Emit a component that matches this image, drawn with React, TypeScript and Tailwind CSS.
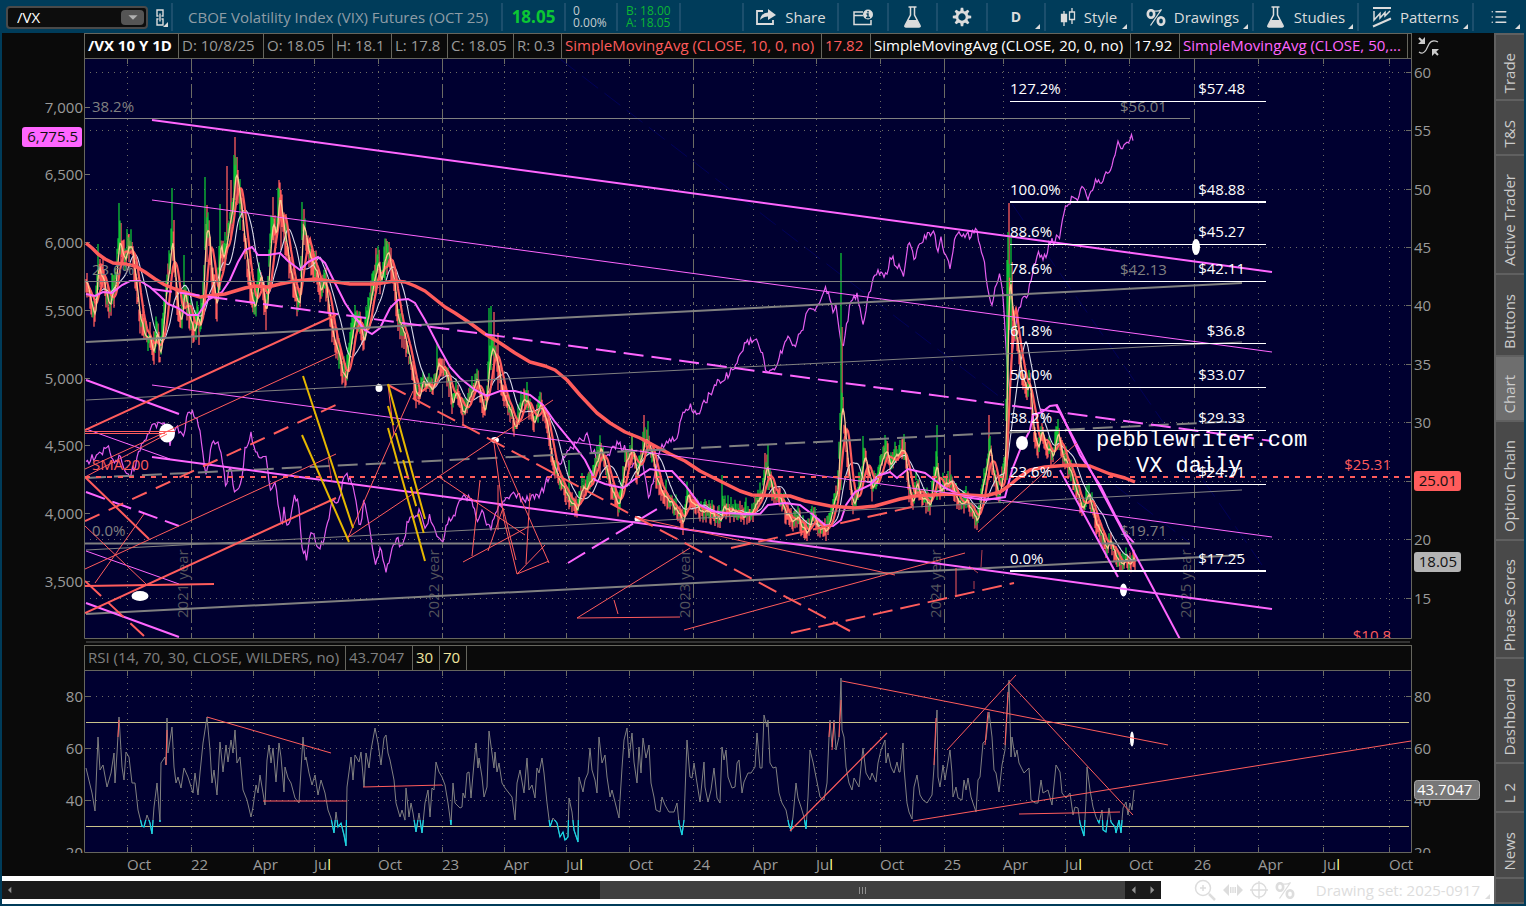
import type { ReactNode } from 'react'
import { List } from 'lucide-react'
import { MdArrowLeft, MdArrowRight, MdArrowDropDown } from 'react-icons/md'

type Line = {
  p: [number, number, number, number]
  c: string
  w?: number
  dash?: string
  o?: number
}

const RED = '#ff5c5c'
const MAGENTA = '#ff66ff'
const GRAY = '#808080'
const YELLOW = '#e6b800'
const WHITE = '#ffffff'
const NAVY = '#000058'

/* ---------- series, x and y in chart units ---------- */

const PRICE = `86,278 91,300 95,320 98,262 104,285 109,305 115,285 119,240 121,250 124,262 129,245 132,250 135,280
140,320 145,336 150,338 153,354 157,330 160,361 163,322 166,290 169,270 172,235 174,265 178,310 181,325 184,290 188,310
194,335 198,305 199,337 203,300 205,235 208,225 212,280 217,308 220,240 223,262 228,230 232,210 235,172 239,190 245,245
249,280 252,300 255,310 258,285 261,275 266,318 270,250 273,220 276,235 279,195 283,225 288,255 294,292 300,308 302,225
305,228 308,250 313,265 317,272 320,292 325,278 332,335 338,355 346,382 350,345 355,320 359,318 364,342 370,300 375,275
378,260 381,285 385,255 388,250 393,275 398,320 404,335 410,360 416,394 420,397 423,380 432,392 437,365 443,368 450,385
452,407 455,390 463,414 470,396 477,378 485,414 489,360 492,348 496,355 500,382 505,396 516,430 521,402 527,400 534,426
541,402 546,418 551,455 558,480 568,496 577,508 582,490 590,485 600,448 605,462 612,492 619,506 625,462 632,448 637,475
645,438 650,445 655,475 662,492 672,505 683,522 687,495 697,508 703,514 708,510 721,522 723,505 730,512 740,514 752,511
762,494 766,465 772,490 780,500 790,522 796,515 806,536 812,517 820,528 826,532 833,505 838,485 840,420 842,400 846,445
850,488 853,504 860,485 864,455 868,470 872,488 877,478 882,460 886,448 890,462 898,455 904,448 908,485 913,504 916,482
922,498 930,505 936,460 940,488 950,480 953,488 958,504 966,500 977,520 982,490 986,465 990,450 993,470 999,496 1005,460
1007,360 1009,270 1012,310 1017,345 1021,370 1026,388 1030,385 1034,440 1038,446 1042,430 1046,445 1053,456 1058,432
1062,455 1070,470 1076,490 1082,508 1088,495 1095,520 1102,535 1107,548 1110,538 1116,560 1122,564 1126,560 1132,563 1135,562`

/* x, top, bottom, up */
const WICKS: [number, number, number, 0 | 1][] = [
  [98, 244, 290, 1], [119, 203, 250, 1], [121, 223, 255, 0], [129, 234, 262, 0], [172, 188, 245, 1],
  [174, 220, 270, 0], [184, 255, 300, 1], [205, 177, 250, 1], [207, 205, 262, 0], [220, 204, 290, 1],
  [227, 166, 240, 0], [231, 180, 240, 0], [234, 155, 215, 1], [235, 137, 200, 0], [237, 157, 205, 0],
  [240, 179, 230, 1], [273, 197, 240, 0], [279, 180, 220, 0], [281, 190, 250, 0], [286, 214, 260, 0],
  [302, 202, 240, 1], [304, 210, 245, 0], [376, 248, 290, 0], [385, 242, 280, 1], [387, 241, 275, 0],
  [437, 343, 380, 1], [489, 308, 380, 1], [491, 306, 370, 1], [494, 312, 380, 0], [498, 333, 390, 0],
  [527, 382, 410, 1], [569, 460, 500, 1], [600, 442, 480, 0], [632, 435, 465, 0], [644, 415, 450, 0],
  [648, 421, 455, 1], [722, 475, 515, 1], [765, 453, 480, 0], [768, 444, 490, 1], [841, 253, 490, 1],
  [842, 327, 400, 0], [863, 436, 480, 1], [885, 435, 465, 1], [904, 434, 460, 1], [937, 425, 500, 1],
  [950, 455, 490, 0], [989, 415, 480, 0], [1007, 260, 480, 1], [1008, 232, 400, 1], [1009, 203, 330, 0],
  [1011, 235, 330, 1], [1012, 262, 350, 0], [1058, 420, 450, 1],
]

const SPX = `86,463 92,458 100,455 108,447 114,460 120,458 125,468 130,475 135,465 140,450 147,438 152,425 158,425 165,423
170,446 176,424 183,438 188,412 194,413 200,430 206,475 212,445 217,440 222,460 226,487 230,465 235,495 240,490 245,450
251,435 256,450 260,460 266,455 270,495 275,480 282,530 284,508 288,530 294,495 298,500 302,545 307,560 311,530 318,545
322,545 328,520 333,500 339,499 345,475 350,480 354,490 360,530 364,500 370,530 376,565 380,545 386,571 392,550 397,538
402,550 408,520 415,515 420,512 425,530 430,515 434,530 440,537 443,538 448,520 455,515 461,498 470,497 477,520 481,510
485,518 490,530 496,515 503,500 510,497 518,495 522,500 530,499 536,498 543,490 548,478 554,475 560,463 565,455 573,447
580,440 587,436 592,450 600,460 608,455 614,445 620,445 626,450 630,470 636,465 642,462 648,497 655,475 660,450 667,443
676,440 682,415 690,405 697,415 705,402 712,390 720,380 728,375 735,365 742,348 750,341 757,342 762,355 768,375 775,370
780,355 787,338 795,345 802,330 809,308 817,308 825,288 829,295 833,315 836,308 843,350 850,305 857,295 863,325 868,300
873,275 880,272 885,278 891,258 898,265 903,278 908,243 914,258 920,243 928,235 934,230 937,255 941,235 945,255 950,265
957,230 963,235 970,235 976,226 979,245 984,260 991,308 996,285 1000,270 1003,298 1007,365 1010,390 1012,350 1018,310
1022,300 1028,292 1033,270 1038,250 1043,262 1050,243 1055,240 1060,235 1065,210 1070,200 1078,197 1084,183 1088,202
1095,182 1102,180 1110,170 1115,158 1118,142 1122,150 1126,145 1131,137 1134,138`

const SMA200 = `86,243 92,248 98,254 105,259 113,263 125,264 135,266 145,272 155,279 165,285 175,289 190,294 200,297 208,296
225,294 235,291 245,288 255,286 268,287 280,284 295,281 315,279 330,281 350,284 375,284 395,281 405,282 415,286 425,291
435,299 445,307 455,313 470,323 485,334 500,343 515,353 530,362 545,366 555,370 567,380 580,395 597,413 610,423 625,432
640,438 655,446 670,454 685,461 700,471 720,481 740,491 752,495 790,496 805,501 830,506 855,508 875,506 900,499 915,496
950,494 985,496 1000,492 1010,485 1018,478 1030,470 1045,467 1070,465 1090,466 1110,474 1125,478 1135,482`

const SMA50 = `86,294 95,296 103,292 112,293 122,285 130,281 140,281 150,287 160,296 168,304 178,308 188,315 198,315 208,300
222,292 230,280 238,262 245,250 252,247 258,255 268,255 280,253 288,261 300,270 308,262 318,257 325,263 335,283 345,303
355,318 365,330 372,334 380,328 390,308 398,300 408,299 415,303 425,320 440,349 450,367 460,378 475,390 487,396 500,391
515,391 530,395 543,405 555,422 570,440 585,460 595,480 605,484 623,488 635,479 650,469 662,471 672,471 685,485 700,505
712,511 725,513 745,514 760,514 768,505 785,503 800,505 812,514 825,525 833,526 841,520 846,505 855,492 870,485 880,475
890,472 897,478 908,469 925,473 945,488 965,497 985,500 1005,497 1012,470 1020,450 1030,430 1033,415 1042,412 1050,406
1057,405 1062,415 1080,455 1100,485 1115,515 1125,533 1134,543`

const RSI = `86,768 92,793 95,811 98,737 100,770 103,765 107,787 111,773 114,753 115,783 117,753 119,717 122,767 124,780
126,752 129,757 132,783 135,783 138,810 142,826 144,827 147,815 150,823 152,834 154,807 157,783 160,822 161,763 165,757
166,765 167,718 168,753 172,727 174,767 176,783 178,777 181,788 184,768 188,777 193,793 195,773 198,795 200,773 203,743
207,717 210,750 212,783 214,770 217,795 220,742 223,772 226,745 228,762 231,740 233,753 235,730 237,763 240,757 243,790
247,800 251,817 253,807 256,785 258,793 260,775 265,805 267,760 269,745 271,763 273,748 276,782 279,743 281,757 284,792
285,767 288,778 291,783 295,798 299,803 303,737 305,760 306,757 309,773 312,785 315,775 318,795 321,780 325,793 328,810
331,818 334,833 336,812 338,827 341,823 344,835 346,846 347,787 351,757 353,780 355,755 359,762 361,752 364,787 366,753
369,768 371,750 375,728 378,743 381,765 384,738 386,735 388,753 390,760 394,780 396,803 400,817 402,810 405,820 406,788
409,817 411,803 413,813 416,832 419,813 422,833 425,803 428,790 430,817 432,788 434,790 436,762 439,772 442,777 445,785
448,803 451,825 453,783 455,803 460,808 462,807 463,793 465,798 467,773 469,772 471,798 474,763 476,743 478,768 479,758
482,777 484,797 487,787 489,731 494,768 495,752 497,772 499,763 502,783 505,788 512,797 515,820 517,783 520,770 524,793
527,758 529,790 532,785 535,798 537,768 539,773 542,758 544,773 547,803 550,827 553,818 557,823 560,837 563,832 565,840
568,837 569,798 572,812 574,830 578,842 579,777 583,792 585,780 588,773 590,748 592,770 595,780 597,793 599,737 602,763
605,755 607,777 610,797 612,790 615,802 619,818 620,800 622,768 624,740 627,728 629,758 632,733 634,762 637,783 639,747
641,773 643,738 646,758 649,745 651,783 654,797 656,810 660,812 662,797 665,805 669,812 674,812 677,803 679,823 682,835
684,820 687,740 690,777 692,778 694,763 697,783 700,802 704,762 705,787 708,802 711,790 714,768 717,798 720,803 722,747
724,760 726,750 728,777 732,788 735,787 737,763 739,760 742,793 744,782 748,773 751,773 755,767 757,733 760,768 762,768
764,715 767,727 768,720 770,763 773,768 776,767 779,793 782,803 786,810 789,825 791,830 793,817 796,783 798,798 801,807
804,817 806,829 808,797 810,750 813,762 816,777 818,787 820,797 824,800 827,783 829,737 830,720 832,747 834,720 836,750
839,737 841,678 842,730 844,737 846,767 849,783 852,790 854,778 859,787 862,757 863,748 866,773 870,780 872,773 876,782
878,763 881,750 885,740 886,763 888,753 891,767 894,773 897,762 899,772 900,772 903,743 904,768 907,803 909,812 912,819
914,787 917,775 920,795 923,800 927,803 932,795 934,767 937,710 938,777 940,787 942,773 943,765 945,780 950,750 952,773
953,797 956,787 958,798 962,800 964,780 966,790 968,778 971,797 973,803 976,812 978,780 980,777 983,743 986,740 987,730
989,712 992,737 994,770 996,773 999,792 1002,765 1005,750 1009,680 1011,757 1012,737 1015,757 1017,750 1019,763 1024,773
1029,768 1031,800 1035,803 1038,803 1041,780 1043,793 1048,790 1052,805 1056,765 1060,772 1062,793 1066,798 1070,793
1073,815 1075,807 1078,808 1080,823 1084,836 1086,800 1087,767 1090,790 1093,807 1096,817 1099,823 1102,810 1103,830
1106,832 1109,808 1111,822 1115,827 1116,833 1119,820 1121,833 1123,808 1126,802 1128,815 1130,803 1132,810 1134,790`

/* repeatable noise in -1..1 */
function noise(n: number) {
  const v = Math.sin(n * 127.1 + 11.7) * 43758.5453
  return (v - Math.floor(v)) * 2 - 1
}

function parse(s: string): number[][] {
  return s.trim().split(/\s+/).map((pair) => pair.split(',').map(Number))
}

function resample(s: string, amp: number, seed: number, step = 1): number[][] {
  const pts = parse(s)
  const out: number[][] = []
  let k = 0
  for (let x = pts[0][0]; x <= pts[pts.length - 1][0]; x += step) {
    while (k < pts.length - 2 && pts[k + 1][0] < x) k++
    const [x0, y0] = pts[k]
    const [x1, y1] = pts[k + 1]
    const y = y0 + ((y1 - y0) * (x - x0)) / (x1 - x0)
    out.push([x, y + noise(x + seed) * amp])
  }
  return out
}

function average(series: number[][], n: number): number[][] {
  return series.map(([x], i) => {
    const part = series.slice(Math.max(0, i - n + 1), i + 1)
    return [x, part.reduce((sum, p) => sum + p[1], 0) / part.length]
  })
}

function toPoints(series: number[][]) {
  return series.map(([x, y]) => `${x},${y.toFixed(1)}`).join(' ')
}

const price = resample(PRICE, 5, 3)
const spx = resample(SPX, 4, 900, 1.5)

let upBars = ''
let downBars = ''
price.forEach(([x, y], i) => {
  const early = x < 420 ? 1.7 : 1
  const top = y - (2 + Math.abs(noise(x * 3)) * 11 * early)
  const bottom = y + (2 + Math.abs(noise(x * 7)) * 8 * early)
  const up = i > 0 ? y < price[i - 1][1] - 1 : false
  const seg = `M${x} ${top.toFixed(1)}V${bottom.toFixed(1)}`
  if (up) upBars += seg
  else downBars += seg
})
WICKS.forEach(([x, top, bottom, up]) => {
  if (up) upBars += `M${x} ${top}V${bottom}`
  else downBars += `M${x} ${top}V${bottom}`
})

/* ---------- drawings ---------- */

const BACK_LINES: Line[] = [
  { p: [560, 59, 1190, 543], c: NAVY, dash: '20 8' },
  { p: [1012, 204, 1262, 565], c: NAVY, dash: '20 8' },
]

const LINES: Line[] = [
  { p: [85, 118.5, 1190, 118.5], c: GRAY },
  { p: [85, 281.5, 1242, 281.5], c: GRAY },
  { p: [85, 543.5, 1190, 543.5], c: GRAY, w: 2 },
  { p: [86, 342, 1242, 283], c: GRAY, w: 2 },
  { p: [86, 400, 1242, 342], c: GRAY },
  { p: [86, 478, 1242, 421], c: GRAY, w: 2, dash: '20 8' },
  { p: [86, 550, 1242, 490], c: GRAY },
  { p: [86, 614, 1242, 555], c: GRAY, w: 2 },
  { p: [152, 120, 1272, 272], c: MAGENTA, w: 2 },
  { p: [152, 200, 1272, 352], c: MAGENTA },
  { p: [152, 289, 1272, 441], c: MAGENTA, w: 2, dash: '20 8' },
  { p: [152, 385, 1272, 537], c: MAGENTA },
  { p: [152, 457, 1272, 609], c: MAGENTA, w: 2 },
  { p: [86, 380, 179, 414], c: MAGENTA, w: 2 },
  { p: [86, 429, 170, 459], c: MAGENTA },
  { p: [86, 492, 179, 526], c: MAGENTA, w: 2, dash: '20 8' },
  { p: [86, 551, 179, 584], c: MAGENTA },
  { p: [86, 603, 179, 637], c: MAGENTA, w: 2 },
  { p: [568, 563, 657, 509], c: MAGENTA, w: 2, dash: '20 8' },
  { p: [1056, 405, 1182, 643], c: MAGENTA, w: 2 },
  { p: [1060, 470, 1118, 577], c: MAGENTA, w: 2 },
  { p: [85, 430, 336, 315], c: RED, w: 2 },
  { p: [85, 469, 336, 354], c: RED },
  { p: [85, 477, 167, 434], c: RED },
  { p: [85, 521, 336, 405], c: RED, w: 2, dash: '16 10' },
  { p: [85, 569, 336, 454], c: RED },
  { p: [85, 613, 336, 498], c: RED, w: 2 },
  { p: [85, 477, 149, 539], c: RED, w: 2 },
  { p: [85, 526, 146, 584], c: RED },
  { p: [95, 583, 144, 514], c: RED },
  { p: [85, 586, 214, 584], c: RED, w: 2 },
  { p: [85, 581, 144, 636], c: RED, w: 2, dash: '22 9' },
  { p: [85, 431.5, 175, 431.5], c: RED },
  { p: [85, 433.5, 165, 433.5], c: RED },
  { p: [328, 458, 332, 482], c: RED, o: 0.7 },
  { p: [347, 540, 413, 391], c: RED },
  { p: [347, 538, 553, 400], c: RED },
  { p: [439, 477, 525, 535], c: RED },
  { p: [463, 562, 528, 527], c: RED },
  { p: [472, 556, 480, 480], c: RED },
  { p: [495, 440, 549, 563], c: RED },
  { p: [494, 443, 504, 520], c: RED },
  { p: [504, 520, 517, 574], c: RED },
  { p: [498, 485, 498, 530], c: RED, w: 2, o: 0.5 },
  { p: [488, 551, 503, 508], c: RED },
  { p: [503, 508, 516, 560], c: RED },
  { p: [517, 574, 549, 561], c: RED },
  { p: [517, 574, 545, 545], c: RED },
  { p: [526, 564, 530, 493], c: RED },
  { p: [388, 385, 850, 631], c: RED, w: 2, dash: '20 8' },
  { p: [388, 385, 394, 435], c: RED },
  { p: [638, 518, 895, 575], c: RED },
  { p: [577, 618, 690, 548], c: RED },
  { p: [577, 618, 680, 617], c: RED },
  { p: [614, 600, 618, 614], c: RED },
  { p: [684, 630, 965, 553], c: RED },
  { p: [731, 548, 912, 507], c: RED, w: 2, dash: '20 8' },
  { p: [791, 633, 1014, 583], c: RED, w: 2, dash: '20 8' },
  { p: [978, 532, 1077, 443], c: RED },
  { p: [956, 568, 956, 596], c: RED },
  { p: [982, 550, 981, 567], c: RED, o: 0.7 },
  { p: [974, 581, 974, 589], c: RED, o: 0.7 },
  { p: [969, 566, 978, 573], c: RED, o: 0.7 },
  { p: [303, 376, 353, 528], c: YELLOW, w: 2 },
  { p: [302, 435, 349, 542], c: YELLOW, w: 2 },
  { p: [388, 384, 425, 519], c: YELLOW, w: 2 },
  { p: [388, 428, 425, 561], c: YELLOW, w: 2 },
  { p: [388, 406, 424, 534], c: YELLOW, w: 2, dash: '20 8' },
  { p: [85, 477, 1411, 477], c: RED, w: 2, dash: '5 6' },
]

const DOTS = [
  [167, 433, 8, 9.5], [140, 596, 8.5, 5], [379, 388, 3.5, 4], [495, 440, 4, 3], [638, 519, 3.5, 3],
  [1022, 443, 6, 7], [1196, 247, 4, 8], [1123.5, 590, 3.5, 6.5],
]

const FIBS: [string, string, number, number][] = [
  ['127.2%', '$57.48', 101.5, 1], ['100.0%', '$48.88', 202, 2], ['88.6%', '$45.27', 244.5, 1],
  ['78.6%', '$42.11', 281.5, 1], ['61.8%', '$36.8', 343.5, 1], ['50.0%', '$33.07', 387.5, 1],
  ['38.2%', '$29.33', 430.5, 1], ['23.6%', '$24.71', 484.5, 1], ['0.0%', '$17.25', 571, 2],
]

const TICKS: [number, string][] = [
  [127, 'Oct'], [191, '22'], [253, 'Apr'], [314, 'Jul'], [378, 'Oct'], [442, '23'], [504, 'Apr'], [566, 'Jul'],
  [629, 'Oct'], [693, '24'], [753, 'Apr'], [816, 'Jul'], [880, 'Oct'], [944, '25'], [1003, 'Apr'], [1065, 'Jul'],
  [1129, 'Oct'], [1194, '26'], [1258, 'Apr'], [1323, 'Jul'], [1389, 'Oct'],
]

const LEFT_AXIS: [string, number][] = [
  ['7,000', 108], ['6,500', 175], ['6,000', 243], ['5,500', 311], ['5,000', 379], ['4,500', 446], ['4,000', 514], ['3,500', 582],
]
const RIGHT_AXIS: [string, number][] = [
  ['60', 73], ['55', 131], ['50', 190], ['45', 248], ['40', 306], ['35', 365], ['30', 423], ['25', 482], ['20', 540], ['15', 599],
]
const RSI_AXIS: [string, number][] = [['80', 697], ['60', 749], ['40', 801], ['20', 853]]

const RSI_LINES: Line[] = [
  { p: [207, 717, 331, 753], c: RED },
  { p: [263, 801, 347, 801], c: RED, w: 1.5, o: 0.7 },
  { p: [363, 787, 442, 785], c: RED },
  { p: [790, 831, 887, 733], c: RED, w: 1.2 },
  { p: [842, 681, 1168, 745], c: RED },
  { p: [947, 750, 1016, 675], c: RED },
  { p: [1009, 682, 1133, 815], c: RED },
  { p: [913, 821, 1411, 741], c: RED },
  { p: [1019, 814, 1120, 812], c: RED },
  { p: [118, 737, 119, 720], c: RED },
  { p: [166, 765, 167, 730], c: RED },
  { p: [829, 737, 830, 722], c: RED },
  { p: [832, 750, 834, 722], c: RED },
  { p: [839, 737, 841, 700], c: RED },
  { p: [934, 765, 936, 718], c: RED },
  { p: [985, 745, 988, 712], c: RED },
  { p: [1005, 745, 1008, 692], c: RED },
]

function Lines({ items }: { items: Line[] }) {
  return (
    <>
      {items.map((l, i) => (
        <line
          key={i}
          x1={l.p[0]}
          y1={l.p[1]}
          x2={l.p[2]}
          y2={l.p[3]}
          stroke={l.c}
          strokeWidth={l.w ?? 1}
          strokeDasharray={l.dash}
          opacity={l.o}
        />
      ))}
    </>
  )
}

function Grid({ top, bottom, rows }: { top: number; bottom: number; rows: number[] }) {
  return (
    <g stroke="#6c6c64">
      {TICKS.map(([x, label]) => {
        const year = /^\d/.test(label)
        return (
          <g key={x}>
            <line x1={x + 0.5} x2={x + 0.5} y1={top} y2={bottom} strokeDasharray={year && top < 100 ? '14 4 3 4' : '1 5'} />
            <line x1={x + 0.5} x2={x + 0.5} y1={top} y2={top + 5} />
            <line x1={x + 0.5} x2={x + 0.5} y1={bottom - 5} y2={bottom} />
          </g>
        )
      })}
      {rows.map((y) => (
        <g key={y}>
          <line x1={90} x2={1406} y1={y - 0.5} y2={y - 0.5} strokeDasharray="1 5" />
          <line x1={1406} x2={1411} y1={y - 0.5} y2={y - 0.5} />
        </g>
      ))}
    </g>
  )
}

function PriceChart() {
  return (
    <svg viewBox="2 59 1492 586" className="block w-full text-[15px]" role="img" aria-label="/VX price chart">
      <defs>
        <clipPath id="price-area">
          <rect x="85" y="59" width="1326" height="579" />
        </clipPath>
      </defs>
      <rect x="85" y="59" width="1326" height="580" fill="#000030" />
      <g clipPath="url(#price-area)">
        <Grid top={59} bottom={638} rows={RIGHT_AXIS.map((r) => r[1])} />
        <Lines items={BACK_LINES} />
        <g fill="#55555c">
          {[188, 439, 690, 941, 1191].map((x, i) => (
            <text key={x} transform={`translate(${x} 618) rotate(-90)`}>{`${2021 + i} year`}</text>
          ))}
        </g>
        {LEFT_AXIS.map(([label, y]) => (
          <line key={label} x1={85} x2={90} y1={y - 0.5} y2={y - 0.5} stroke="#74746c" />
        ))}
        <polyline points={toPoints(spx)} fill="none" stroke="#e65ef0" strokeWidth="1.2" />
        <path d={downBars} stroke={RED} strokeWidth="1.3" />
        <path d={upBars} stroke="#0fc435" strokeWidth="1.3" />
        <polyline points={toPoints(average(price, 20))} fill="none" stroke="#d8d8e8" strokeWidth="1.1" />
        <polyline points={toPoints(average(price, 9))} fill="none" stroke={RED} strokeWidth="2.2" />
        <polyline points={toPoints(average(price, 3))} fill="none" stroke="#ffc890" strokeWidth="1.3" />
        <polyline points={SMA50} fill="none" stroke={MAGENTA} strokeWidth="2" />
        <polyline points={SMA200} fill="none" stroke={RED} strokeWidth="3.5" strokeLinejoin="round" />
        <g fill={GRAY}>
          <text x="92" y="112">38.2%</text>
          <text x="92" y="275">23.6%</text>
          <text x="92" y="536">0.0%</text>
          <text x="1120" y="112">$56.01</text>
          <text x="1120" y="275">$42.13</text>
          <text x="1120" y="536">$19.71</text>
        </g>
        {DOTS.map(([x, y, rx, ry]) => (
          <ellipse key={x} cx={x} cy={y} rx={rx} ry={ry} fill={WHITE} />
        ))}
        <Lines items={LINES} />
        <g fill={WHITE}>
          {FIBS.map(([pct, value, y, w]) => (
            <g key={pct}>
              <line x1={1010} x2={1266} y1={y} y2={y} stroke={WHITE} strokeWidth={w} />
              <text x="1010" y={Math.floor(y) - 7}>{pct}</text>
              <text x="1245" y={Math.floor(y) - 7} textAnchor="end">{value}</text>
            </g>
          ))}
        </g>
        <g fill={RED}>
          <text x="92" y="470">SMA200</text>
          <text x="1391" y="470" textAnchor="end">$25.31</text>
          <text x="1391" y="641" textAnchor="end">$10.8</text>
        </g>
        <g fill={WHITE} className="font-['Liberation_Mono',monospace] text-[22px]">
          <text x="1096" y="446">pebblewriter.com</text>
          <text x="1136" y="472">VX daily</text>
        </g>
      </g>
      <path d="M84.5 59V638.5H1411.5V59" fill="none" stroke="#66665e" />
      <rect x="86" y="641" width="1324" height="2" fill="#333333" />
      <g fill="#9a9a9a">
        {LEFT_AXIS.map(([label, y]) => (
          <text key={label} x="83" y={y + 5} textAnchor="end">{label}</text>
        ))}
        {RIGHT_AXIS.filter(([label]) => label !== '25').map(([label, y]) => (
          <text key={label} x="1414" y={y + 5}>{label}</text>
        ))}
      </g>
      <rect x="22" y="127" width="60" height="20" rx="3" fill={MAGENTA} />
      <rect x="1414" y="471" width="47" height="20" rx="3" fill={RED} />
      <rect x="1414" y="552" width="47" height="20" rx="3" fill="#b4b4b4" />
      <g fill="#111111">
        <text x="78" y="142" textAnchor="end">6,775.5</text>
        <text x="1457" y="486" textAnchor="end">25.01</text>
        <text x="1457" y="567" textAnchor="end">18.05</text>
      </g>
    </svg>
  )
}

function RsiChart() {
  return (
    <svg viewBox="2 671 1492 205" className="block w-full text-[15px]" role="img" aria-label="RSI chart">
      <defs>
        <clipPath id="rsi-axis">
          <rect x="2" y="671" width="1492" height="182" />
        </clipPath>
        <clipPath id="oversold">
          <rect x="85" y="820" width="1326" height="33" />
        </clipPath>
      </defs>
      <rect x="85" y="671" width="1326" height="182" fill="#000030" />
      <Grid top={671} bottom={852} rows={[697, 749, 801]} />
      <path d="M86 722.5H1409M86 826.5H1409" stroke="#c9c28a" />
      <polyline points={RSI} fill="none" stroke="#808080" />
      <polyline points={RSI} fill="none" stroke="#10d8e8" strokeWidth="1.2" clipPath="url(#oversold)" />
      <ellipse cx="1132" cy="739" rx="2" ry="7.5" fill={WHITE} />
      <Lines items={RSI_LINES} />
      <path d="M84.5 671V852.5H1411.5V671" fill="none" stroke="#66665e" />
      <g fill="#9a9a9a" clipPath="url(#rsi-axis)">
        {RSI_AXIS.map(([label, y]) => (
          <g key={label}>
            <path d={`M85 ${y - 0.5}h5`} stroke="#66665e" />
            <text x="83" y={y + 5} textAnchor="end">{label}</text>
            <text x="1414" y={y + 5}>{label}</text>
          </g>
        ))}
      </g>
      <rect x="1414.5" y="780.5" width="65" height="19" rx="3" fill="#777777" stroke="#a8a8a8" />
      <text x="1417" y="795" fill={WHITE}>43.7047</text>
      <g fill="#9a9a9a">
        {TICKS.map(([x, label]) =>
          label === 'Jul' ? (
            <text key={x} x={x} y="870">
              Ju<tspan fill="#ffff99">l</tspan>
            </text>
          ) : (
            <text key={x} x={x} y="870">{label}</text>
          )
        )}
      </g>
    </svg>
  )
}

/* ---------- icons ---------- */

function Corner() {
  return (
    <svg viewBox="0 0 5 5" className="absolute right-1 bottom-0.5 size-[5px] fill-current" aria-hidden="true">
      <path d="M5 0V5H0Z" />
    </svg>
  )
}

function FlaskIcon() {
  return (
    <svg viewBox="0 0 20 22" className="h-[22px] w-5 shrink-0" aria-hidden="true">
      <path d="M5.5 1h8M7.5 1v8L2 19.5Q1.5 21 3 21H16Q17.5 21 17 19.5L11.5 9V1" fill="none" stroke="currentColor" strokeWidth="1.5" />
      <path d="M5 14H14L17.5 21H1.5Z" fill="currentColor" />
    </svg>
  )
}

function LinkIcon() {
  return (
    <svg viewBox="0 0 8 17" className="h-[17px] w-2 shrink-0" fill="none" stroke="currentColor" strokeWidth="1.4" aria-hidden="true">
      <path d="M2.5 7H1V1H7V7H5.5M2.5 10H1V16H7V10H5.5M4 4.5V12.5" />
    </svg>
  )
}

function ShareIcon() {
  return (
    <svg viewBox="0 0 22 18" className="h-[18px] w-[22px]" fill="none" stroke="currentColor" strokeWidth="1.8" aria-hidden="true">
      <path d="M8 3H2V16H18V12" />
      <path d="M5 12Q6 5 13 4.5V1L21 7L13 12V8.500Q8 8.500 5 12Z" fill="currentColor" stroke="none" />
    </svg>
  )
}

function DetachIcon() {
  return (
    <svg viewBox="0 0 20 17" className="h-[17px] w-5" fill="none" stroke="currentColor" strokeWidth="1.5" aria-hidden="true">
      <path d="M10 3H1V15.5H18V11M1 6.5H10" />
      <circle cx="15" cy="5.5" r="5" fill="currentColor" stroke="none" />
      <path d="M15 2V3.5M13.5 5H15V8.5M13 8.5H17" stroke="#003c5a" strokeWidth="1.4" />
    </svg>
  )
}

function GearIcon() {
  return (
    <svg viewBox="-10 -10 20 20" className="size-5" stroke="currentColor" aria-hidden="true">
      <circle r="5" fill="none" strokeWidth="2.6" />
      {[0, 45, 90, 135, 180, 225, 270, 315].map((a) => (
        <path key={a} d="M-1.8 -5.5L-1.2 -9.2H1.2L1.8 -5.5Z" fill="currentColor" stroke="none" transform={`rotate(${a})`} />
      ))}
    </svg>
  )
}

function CandlesIcon() {
  return (
    <svg viewBox="0 0 16 18" className="h-[18px] w-4" stroke="currentColor" strokeWidth="1.3" fill="none" aria-hidden="true">
      <path d="M4 3V18M12 0V4M12 11.5V16" />
      <path d="M1.5 6.5H6.5V13.5H1.5Z" fill="currentColor" />
      <path d="M9.5 4H14.5V11.5H9.5Z" />
    </svg>
  )
}

function PercentIcon() {
  return (
    <svg viewBox="0 0 20 17" className="h-[17px] w-5" fill="none" stroke="currentColor" aria-hidden="true">
      <ellipse cx="5" cy="5" rx="3.2" ry="3.8" strokeWidth="2.6" />
      <ellipse cx="15" cy="12" rx="3.2" ry="3.8" strokeWidth="2.6" />
      <path d="M15.5 .5L4.5 16.5M6 1.5Q11 3 15.5 .8" strokeWidth="1.3" />
    </svg>
  )
}

function PatternsIcon() {
  return (
    <svg viewBox="0 0 20 22" className="h-[22px] w-5" fill="none" stroke="currentColor" aria-hidden="true">
      <path d="M1 2H19M1 20.5L19 12.5" strokeWidth="2" />
      <path d="M2 5V14L8 7.5V12L13 6.5V10L18 5" strokeWidth="1.5" />
    </svg>
  )
}

function ShrinkIcon() {
  return (
    <svg viewBox="0 0 21 19" className="h-[19px] w-[21px]" fill="none" stroke="currentColor" strokeWidth="1.3" aria-hidden="true">
      <path d="M1 15Q5 18 8 13L11 7Q14 2 20 5" />
      <path d="M7 0V7H0ZM14 12H21L14 19Z" fill="currentColor" stroke="none" />
      <path d="M1 1L5 5M20 18L16 14" strokeWidth="2" />
    </svg>
  )
}

/* ---------- toolbar ---------- */

function ToolButton({ width, label, name, icon, corner }: { width: string; label?: string; name?: string; icon?: ReactNode; corner?: boolean }) {
  return (
    <button
      type="button"
      aria-label={name}
      className={`${width} relative flex shrink-0 items-center justify-center gap-2 border-r-2 border-[#1c4f6d]`}
    >
      {icon}
      {label}
      {corner && <Corner />}
    </button>
  )
}

function Toolbar() {
  return (
    <header className="flex h-[33px] shrink-0 bg-[#003c5a] px-0.5 pt-[3px] pb-0.5 text-[15px] text-[#dcdcdc]">
      <div className="flex w-[171px] shrink-0 items-center border-r-2 border-[#1c4f6d] pl-1">
        <div className="flex h-[23px] w-[142px] items-center rounded border-2 border-[#4a4a4a] bg-[#0d0d0d] pr-0.5">
          <input aria-label="Symbol" defaultValue="/VX" className="w-0 flex-1 bg-transparent pl-[9px] text-[15px] text-white outline-none" />
          <button type="button" aria-label="Symbol list" className="flex h-[15px] w-[23px] items-center justify-center rounded-sm bg-[#555555] text-[#b0b0b0]">
            <MdArrowDropDown size={22} />
          </button>
        </div>
        <button type="button" aria-label="Link" className="relative ml-2 flex h-full w-3 items-center">
          <LinkIcon />
          <svg viewBox="0 0 5 5" className="absolute right-0 bottom-1 size-[5px] fill-current" aria-hidden="true">
            <path d="M5 0V5H0Z" />
          </svg>
        </button>
      </div>
      <div className="flex w-[330px] shrink-0 items-center border-r-2 border-[#1c4f6d] pl-[15px] text-[#8f9da6]">
        CBOE Volatility Index (VIX) Futures (OCT 25)
      </div>
      <div className="flex w-[63px] shrink-0 items-center justify-center border-r-2 border-[#1c4f6d] text-[17px] font-bold text-[#0cc734]">18.05</div>
      <div className="flex w-[52px] shrink-0 flex-col justify-center border-r-2 border-[#1c4f6d] pl-[7px] text-xs leading-3 text-[#c5ccd0]">
        <span>0</span>
        <span>0.00%</span>
      </div>
      <div className="flex w-[63px] shrink-0 flex-col justify-center border-r-2 border-[#1c4f6d] pl-2 text-xs leading-3 text-[#0cb634]">
        <span>B: 18.00</span>
        <span>A: 18.05</span>
      </div>
      <div className="flex-1 border-r-2 border-[#1c4f6d]" />
      <ToolButton width="w-[95px]" label="Share" icon={<ShareIcon />} />
      <ToolButton width="w-[50px]" name="Detach" icon={<DetachIcon />} />
      <ToolButton width="w-[49px]" name="Edit studies" icon={<FlaskIcon />} />
      <ToolButton width="w-[50px]" name="Settings" icon={<GearIcon />} />
      <button type="button" className="relative flex w-[58px] shrink-0 items-center justify-center border-r-2 border-[#1c4f6d] text-sm font-bold">
        D
        <Corner />
      </button>
      <ToolButton width="w-[87px]" label="Style" icon={<CandlesIcon />} corner />
      <ToolButton width="w-[121px]" label="Drawings" icon={<PercentIcon />} corner />
      <ToolButton width="w-[105px]" label="Studies" icon={<FlaskIcon />} corner />
      <ToolButton width="w-[115px]" label="Patterns" icon={<PatternsIcon />} corner />
      <button type="button" aria-label="Menu" className="relative flex w-[50px] shrink-0 items-center justify-center">
        <List size={18} />
        <Corner />
      </button>
    </header>
  )
}

/* ---------- header strips ---------- */

const HEADER_CELLS: [string, string][] = [
  ['/VX 10 Y 1D', 'text-white font-bold w-[94px]'],
  ['D: 10/8/25', 'w-[85px]'],
  ['O: 18.05', 'w-[69px]'],
  ['H: 18.1', 'w-[59px]'],
  ['L: 17.8', 'w-[56px]'],
  ['C: 18.05', 'w-[66px]'],
  ['R: 0.3', 'w-[48px]'],
  ['SimpleMovingAvg (CLOSE, 10, 0, no)', 'text-[#ff5c5c] w-[260px]'],
  ['17.82', 'text-[#ff5c5c] w-[49px]'],
  ['SimpleMovingAvg (CLOSE, 20, 0, no)', 'text-white w-[260px]'],
  ['17.92', 'text-white w-[49px]'],
  ['SimpleMovingAvg (CLOSE, 50,...', 'text-[#ff66ff] w-[228px]'],
]

const RSI_CELLS: [string, string][] = [
  ['RSI (14, 70, 30, CLOSE, WILDERS, no)', 'text-[#808080] w-[261px]'],
  ['43.7047', 'text-[#808080] w-[67px]'],
  ['30', 'text-[#f0e6a0] w-[27px]'],
  ['70', 'text-[#f0e6a0] w-[27px]'],
]

function Strip({ cells }: { cells: [string, string][] }) {
  return (
    <div className="flex h-[26px] min-w-0 flex-1 overflow-hidden border border-[#66665e] text-[15px] leading-[22px] text-[#9a9a9a]">
      {cells.map(([text, style]) => (
        <span key={text} className={`${style} shrink-0 border-r border-[#66665e] pl-[3px] whitespace-nowrap`}>
          {text}
        </span>
      ))}
    </div>
  )
}

const TABS: [string, string][] = [
  ['Trade', 'h-[66px]'],
  ['T&S', 'h-[55px]'],
  ['Active Trader', 'h-[119px]'],
  ['Buttons', 'h-[82px]'],
  ['Chart', 'h-[65px]'],
  ['Option Chain', 'h-[119px]'],
  ['Phase Scores', 'h-[118px]'],
  ['Dashboard', 'h-[105px]'],
  ['L 2', 'h-[49px]'],
  ['News', 'h-[66px]'],
]

function SideTabs() {
  return (
    <nav className="flex w-[30px] shrink-0 flex-col border-2 border-r-0 border-[#606060] bg-[#494949] text-[15px] text-[#cccccc]">
      {TABS.map(([name, height]) => (
        <button
          key={name}
          type="button"
          className={`${height} flex shrink-0 items-center justify-center border-b-2 border-[#606060] pt-3 pr-0.5 ${name === 'Chart' ? 'bg-[#6e6e6e]' : ''}`}
        >
          <span className="rotate-180 whitespace-nowrap [writing-mode:vertical-rl]">{name}</span>
        </button>
      ))}
    </nav>
  )
}

function BottomBar() {
  return (
    <footer className="flex h-7 items-center bg-white text-[#dddddd]">
      <div className="flex h-[18px] w-[1159px] bg-[#1a1a1a] text-[#909090]">
        <button type="button" aria-label="Scroll to start" className="flex w-4 items-center justify-center">
          <MdArrowLeft size={18} />
        </button>
        <div className="flex-1" />
        <div className="flex w-[525px] items-center justify-center gap-0.5 bg-[#404040]">
          <span className="h-[7px] w-px bg-[#909090]" />
          <span className="h-[7px] w-px bg-[#909090]" />
          <span className="h-[7px] w-px bg-[#909090]" />
        </div>
        <button type="button" aria-label="Scroll left" className="flex w-[18px] items-center justify-center">
          <MdArrowLeft size={18} />
        </button>
        <button type="button" aria-label="Scroll right" className="flex w-[18px] items-center justify-center">
          <MdArrowRight size={18} />
        </button>
      </div>
      <div className="relative flex flex-1 items-center justify-end gap-[7px] pr-3.5">
        <button type="button" aria-label="Zoom in">
          <svg viewBox="0 0 22 22" className="size-[22px]" fill="none" stroke="currentColor" strokeWidth="1.5" aria-hidden="true">
            <circle cx="9" cy="9" r="7.5" />
            <path d="M6 9H12M9 6V12" />
            <path d="M15 15L21 21" strokeWidth="2.5" />
          </svg>
        </button>
        <button type="button" aria-label="Pan">
          <svg viewBox="0 0 20 12" className="h-3 w-5" fill="currentColor" aria-hidden="true">
            <path d="M6 0V12L0 6ZM14 0V12L20 6ZM7 3H8.500V9H7ZM9.300 3H10.700V9H9.300ZM11.500 3H13V9H11.500Z" />
          </svg>
        </button>
        <button type="button" aria-label="Crosshair">
          <svg viewBox="0 0 18 18" className="size-[18px]" fill="none" stroke="currentColor" strokeWidth="1.4" aria-hidden="true">
            <circle cx="9" cy="9" r="7" />
            <path d="M0 9H18M9 0V18" />
          </svg>
        </button>
        <button type="button" aria-label="Drawing tools">
          <PercentIcon />
        </button>
        <button type="button" className="ml-3.5 text-[15px] whitespace-nowrap">Drawing set: 2025-0917</button>
        <Corner />
      </div>
    </footer>
  )
}

export default function App() {
  return (
    <div className="flex min-h-screen flex-col bg-[#003c5a] font-['Open_Sans','Noto_Sans',sans-serif]">
      <Toolbar />
      <div className="flex flex-1 px-0.5 pb-0.5">
        <main className="flex min-w-0 flex-1 flex-col bg-[#0a0a0a]">
          <div className="flex pl-[82px]">
            <Strip cells={HEADER_CELLS} />
            <button type="button" aria-label="Collapse" className="flex w-[82px] items-center pl-1.5 text-[#cccccc]">
              <ShrinkIcon />
            </button>
          </div>
          <PriceChart />
          <div className="flex pr-[82px] pl-[82px]">
            <Strip cells={RSI_CELLS} />
          </div>
          <RsiChart />
          <BottomBar />
        </main>
        <SideTabs />
      </div>
    </div>
  )
}
